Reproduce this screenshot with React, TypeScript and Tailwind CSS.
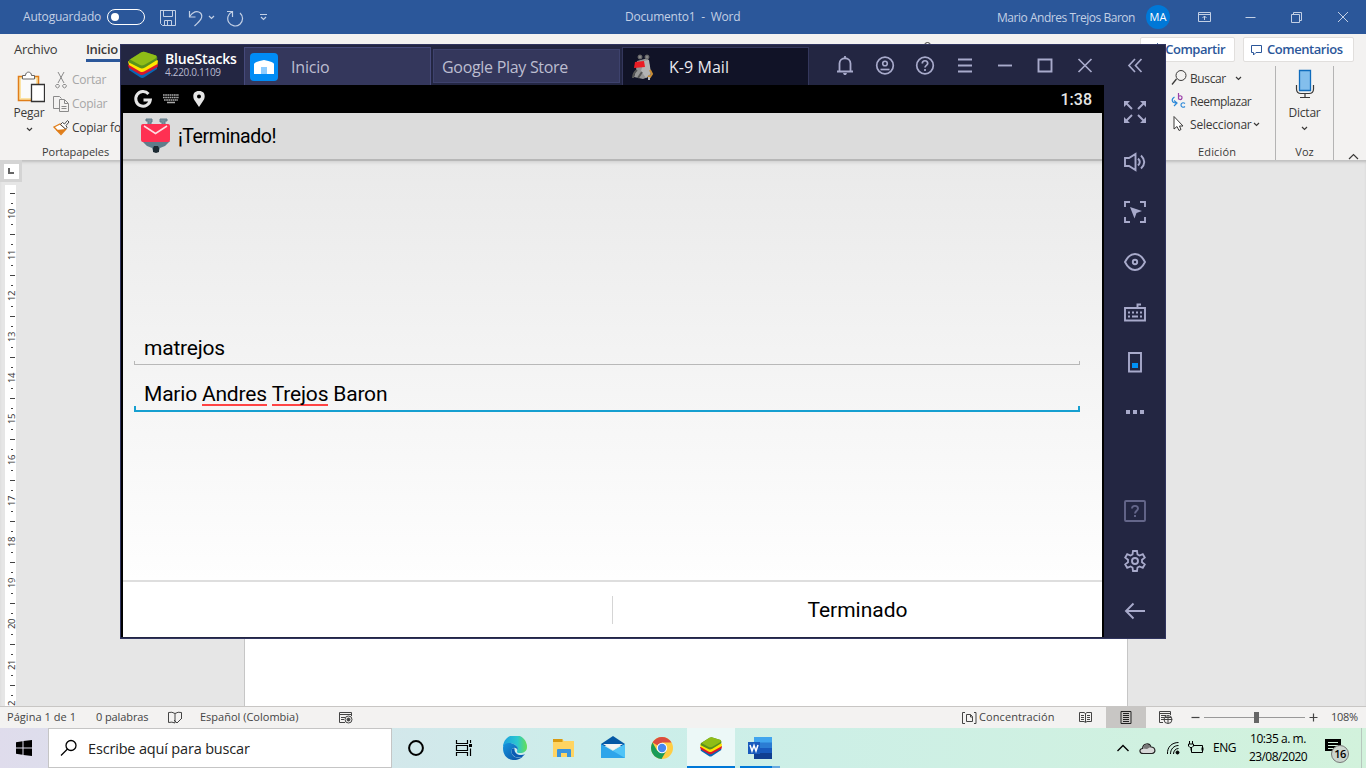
import type { ReactNode } from "react";

type IconProps = { w: number; h: number; className?: string; children: ReactNode };

function Icon({ w, h, className = "", children }: IconProps) {
  return (
    <svg width={w} height={h} viewBox={`0 0 ${w} ${h}`} fill="none" stroke="currentColor" className={`block shrink-0 ${className}`}>
      {children}
    </svg>
  );
}

function Chevron({ className = "" }: { className?: string }) {
  return (
    <Icon w={7} h={5} className={className}>
      <path d="M1 1l2.500 2.500L6 1" strokeWidth="1.200" />
    </Icon>
  );
}

function StackLogo({ size }: { size: number }) {
  return (
    <svg width={size} height={size} viewBox="0 0 30 28" className="block shrink-0">
      <path d="M1 17L16 11 29 16 29 18 16 26.500Q14 27.500 12 26.200L1 19z" fill="#0867b5" />
      <path d="M0 14L16 9 30 13 29.500 16 16 23.500Q14 24.500 12 23.400L1 17z" fill="#d8172d" />
      <path d="M0 10.500L16 6 30 9.500 29.500 13 16 20.500Q14 21.500 12 20.400L1 14z" fill="#ffe600" />
      <path d="M1 9L13 1.500Q15 .5 17 1L28 4.500Q30 6 29 9L17 16.500Q14 18 12 17L1 11.500z" fill="#58921b" />
      <path d="M2 8.500L13 1.500Q15 .5 17 1L28 4.500Q29.500 6 27.500 7.500L17 13.500Q14 15 12 14z" fill="#8fbd17" />
    </svg>
  );
}

function TitleBar() {
  return (
    <header className="flex h-[34px] shrink-0 items-center bg-[#2b579a] text-[#c3d0e5]">
      <span className="ml-[23px] w-[84px] text-[12px] tracking-[-0.2px]">Autoguardado</span>
      <div className="flex h-[16px] w-[38px] items-center rounded-full border border-white px-[3px]">
        <i className="size-[8px] rounded-full bg-white" />
      </div>
      <Icon w={18} h={18} className="ml-[14px] mt-[2px]">
        <path d="M1 1.500H16.500V16.500H3.500L1.500 14.500V1.500zM4.500 1.500V7.500H13.500V1.500M5.500 16.500V11.500H12.500V16.500M8.500 12V16" />
      </Icon>
      <Icon w={16} h={18} className="ml-[11px] mt-[1px]">
        <path d="M1.500 2V8H7.500M1.500 7.500C5 3 9 1 12.500 4 16 8 12 12 6.500 17" strokeWidth="1.200" />
      </Icon>
      <Chevron className="ml-[4px]" />
      <Icon w={18} h={18} className="ml-[11px] mt-[1px]">
        <path d="M1 2.500H6.500V8M6.200 2.800A7.400 7.400 0 1 0 14 4" strokeWidth="1.200" />
      </Icon>
      <Icon w={9} h={8} className="ml-[15px]">
        <path d="M1 1.500H8M2 4l2.500 2.500L7 4" strokeWidth="1.200" />
      </Icon>
      <span className="ml-[357px] w-[118px] whitespace-pre text-[12px] tracking-[-0.22px]">Documento1  -  Word</span>
      <span className="ml-auto w-[149px] whitespace-nowrap pt-[1px] text-[12px] tracking-[-0.47px]">Mario Andres Trejos Baron</span>
      <span className="mr-[28px] flex size-[24px] items-center justify-center rounded-full bg-[#0078d7] text-[11px] text-white">MA</span>
      <Icon w={14} h={12} className="mr-[33px]">
        <path d="M.5 1.500H12.500V10.500H.5zM.5 3.500H12.500M6.500 9V5M4.500 7l2-2 2 2" />
      </Icon>
      <Icon w={11} h={11} className="mr-[35px]">
        <path d="M.5 5.500H10.500" />
      </Icon>
      <Icon w={11} h={11} className="mr-[35px]">
        <path d="M.5 2.500H8.500V10.500H.5zM2.500 2V.5H10.500V8.500H9" />
      </Icon>
      <Icon w={12} h={12} className="mr-[17px]">
        <path d="M1 1l10 10M11 1L1 11" />
      </Icon>
    </header>
  );
}

function Ribbon() {
  return (
    <section className="flex h-[126px] shrink-0 justify-between bg-[#f3f2f1] text-[#3b3a39]">
      <div className="flex w-[130px] flex-col">
        <div className="flex h-[30px] pl-[14px] pt-[6px] text-[13px] leading-[18px]">
          <span className="w-[72px] tracking-[-0.3px]">Archivo</span>
          <span className="h-[22px] w-[34px] whitespace-nowrap border-b-[3px] border-[#2b579a] font-semibold tracking-[-0.35px]">Inicio</span>
        </div>
        <div className="flex h-[80px] text-[12px]">
          <div className="flex w-[53px] shrink-0 flex-col items-center pl-[5px] pt-[7px]">
            <Icon w={28} h={32} className="ml-[4px]">
              <path d="M1.500 5.500H21.500V29.500H1.500z" stroke="#e07e1a" strokeWidth="1.500" fill="#fbe3a5" />
              <path d="M4 8H19V27H4z" fill="#fafafa" stroke="none" />
              <path d="M5.500 8V4.500H8.500C8.500 0 14.500 0 14.500 4.500H17.500V8z" fill="#fff" stroke="#666" />
              <path d="M14.500 13.500H27.500V30.500H14.500z" fill="#fff" stroke="#333" strokeWidth="1.300" />
            </Icon>
            <span className="mt-[1px] leading-[17px] tracking-[-0.2px]">Pegar</span>
            <Chevron className="mt-[6px]" />
          </div>
          <div className="flex flex-col whitespace-nowrap pt-[4px] leading-[24px] text-[#a6a6a6]">
            <div className="flex h-[24px] items-center">
              <Icon w={19} h={18}><path d="M5 1l6 11M11 1L5 12M3.500 13.500a1.800 1.800 0 1 0 2 0zM10.500 13.500a1.800 1.800 0 1 0 2 0z" stroke="#8a8a8a" /></Icon>
              <span className="tracking-[-0.25px]">Cortar</span>
            </div>
            <div className="flex h-[24px] items-center">
              <Icon w={19} h={18}><path d="M6 13.500H.5V1.500H6.500L8.500 3.500M6.500 4.500H11.500L15.500 8.500V16.500H6.500zM11.500 5V8.500H15M8.500 11.500H13.500M8.500 13.500H13.500" stroke="#8a8a8a" /></Icon>
              <span className="tracking-[-0.25px]">Copiar</span>
            </div>
            <div className="flex h-[24px] items-center text-[#3b3a39]">
              <Icon w={19} h={18}>
                <path d="M1 8L7 5 13 10 8 15.500Z" fill="#fff" stroke="#e07e1a" strokeWidth="1.300" />
                <path d="M3 11L8 15 13 10z" fill="#e07e1a" stroke="none" />
                <path d="M7.500 5.500l2-2 2 1.500 3-3.500 1.500 1.500-3 3.500 1 2-1.500 1.500z" fill="#fff" stroke="#444" />
              </Icon>
              <span className="tracking-[-0.25px]">Copiar fo</span>
            </div>
          </div>
        </div>
        <span className="ml-[42px] text-[11px] leading-[16px] tracking-[-0.05px]">Portapapeles</span>
      </div>
      <div className="grow pl-[793px] pt-[7px]">
        <Icon w={9} h={9}><circle cx="4.500" cy="4.500" r="3" /></Icon>
      </div>
      <div className="flex w-[226px] flex-col">
        <div className="flex h-[30px] items-start justify-end gap-[8px] pr-[12px] pt-[3px] text-[13px] font-semibold text-[#2b579a]">
          <button className="flex h-[25px] w-[95px] justify-end rounded-[2px] border border-[#e1dfdd] bg-white pr-[9px] leading-[22px] tracking-[-0.5px]">
            <Icon w={12} h={16} className="mt-[5px]"><path d="M4.500 .5V8M1.500 3.500l3-3 3 3M1.500 8V12.500H8" /></Icon>
            Compartir
          </button>
          <button className="flex h-[25px] w-[111px] items-center rounded-[2px] border border-[#e1dfdd] bg-white pl-[6px] tracking-[-0.45px]">
            <Icon w={13} h={12} className="mr-[4px]"><path d="M1.500 1.500H11.500V8.500H6L3.500 11V8.500H1.500z" /></Icon>
            Comentarios
          </button>
        </div>
        <div className="flex grow text-[12px]">
          <div className="my-[4px] flex w-[136px] flex-col border-r border-[#b4b4b4] pl-[31px]">
            <div className="flex h-[23px] items-center">
              <Icon w={19} h={18}><path d="M5.500 10L1 15.500" strokeWidth="1.300" /><circle cx="10" cy="6.500" r="5" /></Icon>
              <span className="w-[45px] pt-[2px] tracking-[-0.4px]">Buscar</span><Chevron className="mt-[2px]" />
            </div>
            <div className="flex h-[23px] items-center">
              <Icon w={19} h={18}>
                <path d="M3.500 5C0 7 .5 11 5 11M3 8.500L6 11 3 14" stroke="#2b88d8" strokeWidth="1.200" />
                <path d="M7.500 1V7.500M7.500 4.500C9 3 11.500 4 11 6 10.500 8 8.500 8 7.500 6.500" stroke="#9b3fa9" strokeWidth="1.200" />
                <path d="M14 11.500C12 10 10 11 10 13S12 16 14 14.500" stroke="#2b88d8" strokeWidth="1.200" />
              </Icon>
              <span className="pt-[3px] tracking-[-0.5px]">Reemplazar</span>
            </div>
            <div className="flex h-[23px] items-center">
              <Icon w={19} h={18}><path d="M3 1.500V14L6 11.500 8 15.500 10 14.500 8.500 11H12z" fill="#fff" /></Icon>
              <span className="w-[63px] pt-[2px] tracking-[-0.2px]">Seleccionar</span><Chevron className="mt-[2px]" />
            </div>
            <span className="ml-[27px] mt-[8px] text-[11px] leading-[17px] tracking-[0.15px]">Edición</span>
          </div>
          <div className="my-[4px] flex w-[58px] flex-col items-center border-r border-[#b4b4b4]">
            <Icon w={20} h={30} className="mt-[3px]">
              <path d="M4.500 1.500H15.500V21.500H4.500z" fill="#83beec" stroke="#0f6cbd" strokeWidth="1.300" />
              <path d="M1.500 16V20Q1.500 24.500 6 24.500H14Q18.500 24.500 18.500 20V16M10 24.500V28.500M5 28.500H15" strokeWidth="1.200" />
            </Icon>
            <span className="mt-[6px] leading-[16px] tracking-[-0.2px]">Dictar</span>
            <Chevron className="mt-[5px]" />
            <span className="mt-[12px] text-[11px] leading-[17px]">Voz</span>
          </div>
          <div className="flex grow items-end justify-center pb-[4px] pl-[6px]">
            <Icon w={11} h={7}><path d="M1 6l4.500-4.500L10 6" strokeWidth="1.200" /></Icon>
          </div>
        </div>
      </div>
    </section>
  );
}

const RULER = [10, 11, 12, 13, 14, 15, 16, 17, 18, 19, 20, 21, 22];

function Workspace() {
  return (
    <main className="flex h-[546px] shrink-0 overflow-hidden bg-[#e6e6e6] shadow-[inset_0_3px_3px_-1px_#bdbdbd]">
      <div className="w-[244px]">
        <div className="flex size-[22px] items-center justify-center bg-[#d4d4d4]">
          <div className="flex size-[15px] items-center justify-center bg-white">
            <i className="size-[6px] border-b-2 border-l-2 border-[#666]" />
          </div>
        </div>
        <div className="ml-[5px] mt-[3px] flex h-[521px] w-[11px] flex-col overflow-hidden bg-white pt-[8px]">
          {RULER.map((n) => (
            <div key={n} className="flex h-[41px] shrink-0 flex-col items-center">
              <i className="ml-[4px] h-px w-[5px] bg-[#444]" />
              <i className="ml-[3px] mt-[9px] h-px w-[2px] bg-[#444]" />
              <span className="ml-[2px] flex h-[20px] w-[12px] rotate-180 items-center justify-center text-[9.500px] leading-[12px] tracking-[-0.4px] text-[#333] [writing-mode:vertical-rl]">{n}</span>
              <i className="ml-[3px] h-px w-[2px] bg-[#444]" />
            </div>
          ))}
        </div>
      </div>
      <div className="w-[884px] border-x border-[#c6c6c6] bg-white" />
    </main>
  );
}

function StatusBar() {
  return (
    <footer className="flex h-[22px] shrink-0 items-center whitespace-nowrap border-t border-[#c8c6c4] bg-[#f3f2f1] text-[11px] text-[#444]">
      <span className="ml-[7px] w-[89px] tracking-[0.05px]">Página 1 de 1</span>
      <span className="w-[72px] tracking-[-0.1px]">0 palabras</span>
      <Icon w={15} h={13}><path d="M7 2.500Q4 .5 .5 1.500V11.500Q4 10.500 7 12M7 12V2.500Q10 .5 13.500 1.500V8M6 9l3 3 5-5" /></Icon>
      <span className="ml-[17px] w-[138px]">Español (Colombia)</span>
      <Icon w={15} h={13}>
        <path d="M7 11.500H1.500V1.500H13.500V5M1.500 3.500H13M3 6.500H7M3 8.500H6" /><circle cx="10.500" cy="8.500" r="3.500" /><circle cx="10.500" cy="8.500" r="1.500" fill="currentColor" />
      </Icon>
      <Icon w={15} h={14} className="ml-auto">
        <path d="M3 1.500H.5V12.500H3M12 12.500H14V1.500H12M4.500 3.500H8.500L10.500 5.500V10.500H4.500zM8.500 3.500V6H10.500" />
      </Icon>
      <span className="ml-[2px] w-[100px] tracking-[0.08px]">Concentración</span>
      <Icon w={14} h={13}><path d="M6.500 2.500L5 1.500H.5V10.500H5L6.500 11.500 8 10.500H12.500V1.500H8L6.500 2.500V11M2 4.500H5M2 6.500H5M2 8.500H5M8 4.500H11M8 6.500H11M8 8.500H11" /></Icon>
      <div className="ml-[13px] flex h-[22px] w-[40px] items-center justify-center bg-[#c8c6c4]">
        <Icon w={12} h={15}><path d="M1 1.500H11V13.500H1zM3 3.500H9M3 5.500H9M3 7.500H9M3 9.500H9M3 11.500H9" stroke="#222" /></Icon>
      </div>
      <Icon w={15} h={15} className="ml-[12px]"><path d="M5 12.500H1.500V1.500H12.500V5M1.500 3.500H12M3 5.500H8M3 7.500H6M3 9.500H6" /><circle cx="10" cy="9.500" r="4" /><path d="M6 9.500H14M10 5.500V13.500M7 7.500H13" /></Icon>
      <Icon w={9} h={9} className="ml-[18px]"><path d="M.5 4.500H8.500" strokeWidth="1.200" /></Icon>
      <div className="ml-[4px] flex h-[11px] w-[101px] items-center">
        <i className="h-px w-[50px] bg-[#999]" /><i className="h-[11px] w-[5px] bg-[#666]" /><i className="h-px grow bg-[#999]" />
      </div>
      <Icon w={9} h={9} className="ml-[4px]"><path d="M.5 4.500H8.500M4.500 .5V8.500" strokeWidth="1.200" /></Icon>
      <span className="ml-[13px] w-[35px] tracking-[-0.3px]">108%</span>
    </footer>
  );
}

function Cell({ className = "", children }: { className?: string; children: ReactNode }) {
  return <div className={`flex h-[40px] w-[48px] shrink-0 items-center justify-center ${className}`}>{children}</div>;
}

function Taskbar() {
  return (
    <nav className="flex h-[40px] shrink-0 items-center bg-linear-to-r from-[#dfdcec] via-[#cbeeea] via-45% to-[#d2f2dc] text-[12px] text-black">
      <Cell>
        <Icon w={16} h={16}><path d="M0 2.300L6.500 1.300V7.500H0zM7.500 1.100L16 0V7.500H7.500zM0 8.500H6.500V14.700L0 13.700zM7.500 8.500H16V16L7.500 14.900z" fill="#000" stroke="none" /></Icon>
      </Cell>
      <div className="flex h-[40px] w-[344px] items-center border border-[#c5c5c5] bg-white">
        <Icon w={18} h={18} className="ml-[11px]"><circle cx="11" cy="6.500" r="5" strokeWidth="1.300" /><path d="M7.500 10L1 16.500" strokeWidth="1.300" /></Icon>
        <span className="ml-[10px] whitespace-nowrap pt-[1px] text-[14.500px] tracking-[-0.17px] text-[#222]">Escribe aquí para buscar</span>
      </div>
      <Cell><Icon w={18} h={18}><circle cx="9" cy="9" r="6.900" strokeWidth="2" /></Icon></Cell>
      <Cell>
        <Icon w={18} h={16}><path d="M1.500 0V3.500H12.500V0M1.500 16V12.500H12.500V16M1.500 5.500H12.500V10.500H1.500zM15.500 0V3M15.500 8.500V16" strokeWidth="1.200" /><path d="M14 4H17V7H14z" fill="#000" stroke="none" /></Icon>
      </Cell>
      <Cell className="ml-[3px]">
        <svg width="24" height="24" viewBox="0 0 24 24">
          <defs>
            <linearGradient id="edgeTop" x1="0" x2="1"><stop stopColor="#1b9fdf" /><stop offset=".6" stopColor="#2cc7cf" /><stop offset="1" stopColor="#65df55" /></linearGradient>
            <linearGradient id="edgeLow" x1="0" y1="0" x2="1" y2="1"><stop stopColor="#1595df" /><stop offset="1" stopColor="#0c4da0" /></linearGradient>
          </defs>
          <path d="M0 11A12 12 0 0 1 24 11C24 15 21 17 17 17 13 17 14 15 14.500 13.500 15 9 10 7 6 7.500 3 8 1 9 0 11z" fill="url(#edgeTop)" />
          <path d="M0 12C0 8 5 6 9 7.500 14 9 15.500 12 14.500 14 13 11 9 11 8.500 15 8 20 14 24 20 20.500 14 27 0 25 0 12z" fill="url(#edgeLow)" />
          <path d="M8.700 14C7.500 19 13 23 19 21L22 18.200C18 20 11 19 11.500 12.500 9.800 12 9 13 8.700 14z" fill="#0b5bb4" />
        </svg>
      </Cell>
      <Cell className="ml-[1px]">
        <svg width="22" height="20" viewBox="0 0 22 20">
          <path d="M0 1H9L11 3H21V19H0z" fill="#ffd461" /><path d="M0 1H9.500V4H0z" fill="#d99a10" /><path d="M4 19V12Q4 11 5 11H17Q18 11 18 12V19H14V15H8V19z" fill="#3a94dc" />
        </svg>
      </Cell>
      <Cell className="ml-[1px]">
        <svg width="24" height="24" viewBox="0 0 24 24">
          <path d="M0 8L12 0 24 8V10H0z" fill="#0558a5" /><path d="M0 8L12 15 24 8V22H0z" fill="#2da5ea" /><path d="M12 15L24 8V22z" fill="#4fc4f7" /><path d="M2 8H22L12 14z" fill="#f5f5f5" />
        </svg>
      </Cell>
      <Cell className="ml-[1px]">
        <svg width="22" height="22" viewBox="0 0 22 22">
          <circle cx="11" cy="11" r="11" fill="#ffcd43" />
          <path d="M11 11L1.500 5.500A11 11 0 0 1 20.500 5.500H11z" fill="#db4c3f" />
          <path d="M1.500 5.500A11 11 0 0 0 10.500 22L15.500 13.500 6.200 13.700z" fill="#199b57" />
          <circle cx="11" cy="11" r="5.200" fill="#fff" /><circle cx="11" cy="11" r="4.200" fill="#4888ef" />
        </svg>
      </Cell>
      <Cell className="ml-[1px] border-b-2 border-[#0078d7] bg-[#ecf8f7]"><StackLogo size={22} /></Cell>
      <Cell className="ml-[1px]">
        <div className="flex h-[40px] w-[40px] flex-col items-center justify-end">
          <svg width="24" height="22" viewBox="0 0 24 22" className="mb-[7px]">
            <path d="M6 0H24V6H6z" fill="#41a5ee" /><path d="M6 5.500H24V11H6z" fill="#2b7cd3" /><path d="M6 11H24V16H6z" fill="#185abd" /><path d="M6 16H24V22H6z" fill="#103f91" /><path d="M0 5H12V17H0z" fill="#185abd" />
            <path d="M2 8L4 14 6 8.500 8 14 10 8" fill="none" stroke="#fff" strokeWidth="1.500" />
          </svg>
          <div className="flex h-[2px] w-full bg-[#0078d7]"><i className="ml-auto h-[2px] w-[8px] bg-[#66a9e0]" /></div>
        </div>
      </Cell>
      <Icon w={14} h={10} className="ml-auto"><path d="M1.500 8l5.500-5.500L12.500 8" strokeWidth="1.400" /></Icon>
      <Icon w={17} h={13} className="ml-[9px]">
        <path d="M4 11.500C0 11.500 0 6.500 3.500 6.500 4 1 10.500 .5 12 5 17 5 17 11.500 13 11.500z" fill="#d8d8d8" stroke="#222" strokeWidth="1.200" /><path d="M4 6.500C5 1 10 1 11.500 5L8 7z" fill="#777" stroke="none" />
      </Icon>
      <Icon w={14} h={14} className="ml-[10px]"><path d="M1.500 13C1 6 6 1.500 12.500 1.500M4.500 13C4.500 8 8 4.500 12.500 4.500M7.500 13C7.500 10 9.500 7.500 12.500 7.500" /><circle cx="11.500" cy="11.500" r="1.500" fill="#000" /></Icon>
      <Icon w={17} h={14} className="ml-[7px]"><path d="M6 4.500H15.500V11.500H4.500V7M2.500 0V3M5.500 0V3M1.500 3H6.500V5L5 6.500H3L1.500 5zM4 7V9.500" /><path d="M15.500 6.500V9.500" strokeWidth="2" /></Icon>
      <span className="ml-[9px] w-[25px] tracking-[-0.5px]">ENG</span>
      <div className="flex w-[80px] flex-col items-center whitespace-nowrap text-[12px] leading-[18px]"><span className="tracking-[-0.45px]">10:35 a. m.</span><span className="tracking-[-0.55px]">23/08/2020</span></div>
      <div className="relative ml-[6px] mr-[19px] mt-[-2px]">
        <Icon w={18} h={18}><path d="M1 1H17V13H13V17L9 13H1z" fill="#000" stroke="none" /><path d="M4 4.500H14M4 7.500H14M4 10.500H10" stroke="#d4f2de" /></Icon>
        <span className="absolute left-[7px] top-[7px] flex size-[18px] items-center justify-center rounded-full border border-[#777] bg-[#ccd6cf] text-[11px] font-semibold tracking-[-0.5px]">16</span>
      </div>
      <i className="mr-[4px] h-[40px] w-px bg-[#b7c7be]" />
    </nav>
  );
}

function HeaderIcons() {
  return (
    <div className="flex items-center text-[#a8aacb]">
      <Icon w={40} h={40}><path d="M14.500 26.500V18.500C14.500 11.500 25.500 11.500 25.500 18.500V26.500M12 26.500H28M20 11V13" strokeWidth="1.800" /><path d="M18 28H22L21 30H19z" fill="currentColor" stroke="none" /></Icon>
      <Icon w={40} h={40}><circle cx="20" cy="20.500" r="8.300" strokeWidth="1.700" /><circle cx="20" cy="18.500" r="2.300" strokeWidth="1.600" /><path d="M15.500 24.500H24.500" strokeWidth="1.700" /></Icon>
      <Icon w={40} h={40}><circle cx="20" cy="20.500" r="8.300" strokeWidth="1.700" /><path d="M17.300 18.500C17.300 14.800 22.700 14.800 22.700 18.500 22.700 20.200 20 20.500 20 22.500M20 24V26" strokeWidth="1.700" /></Icon>
      <Icon w={40} h={40}><path d="M13 14.500H27M13 20.500H27M13 26.500H27" strokeWidth="1.900" /></Icon>
      <Icon w={40} h={40}><path d="M13 20.500H27" strokeWidth="1.900" /></Icon>
      <Icon w={40} h={40}><path d="M13.500 14.500H26.500V26.500H13.500z" strokeWidth="1.900" /></Icon>
      <Icon w={40} h={40}><path d="M13.500 14L26.500 27M26.500 14L13.500 27" strokeWidth="1.700" /></Icon>
      <Icon w={40} h={40} className="ml-[10px]"><path d="M20 14L14 20.500 20 27M26.500 14L20.500 20.500 26.500 27" strokeWidth="1.700" /></Icon>
    </div>
  );
}

function Tool({ className = "", children }: { className?: string; children: ReactNode }) {
  return <Icon w={24} h={50} className={className}><g transform="translate(0 13)" strokeWidth="1.900">{children}</g></Icon>;
}

function SideTools() {
  return (
    <aside className="flex w-[61px] shrink-0 flex-col items-center pt-[2px] text-[#a8aacb]">
      <Tool><path d="M3.500 3.500L9 9M20.500 3.500L15 9M3.500 20.500L9 15M20.500 20.500L15 15" /><path d="M1 1H7L1 7zM23 1H17L23 7zM1 23H7L1 17zM23 23H17L23 17z" fill="currentColor" stroke="none" /></Tool>
      <Tool><path d="M2 8H6L12.500 4V20L6 16H2zM15 8.500Q18.500 12 15 15.500M18 5.500Q24.500 12 18 18.500" /></Tool>
      <Tool><path d="M2 7V2H7M17 2H22V7M2 17V22H7M17 22H22V17" /><path d="M7 7L19 11 13.500 13 11.500 18.500z" fill="currentColor" stroke="none" /></Tool>
      <Tool><path d="M2 12Q6 4 12 4T22 12Q18 20 12 20T2 12z" /><circle cx="12" cy="12" r="2.200" /></Tool>
      <Tool><path d="M2 8H22V20.500H2zM14.500 8V4.500H18M5 12.500H7M9 12.500H11M13 12.500H15M17 12.500H19M5 16.500H7M9 16.500H15M17 16.500H19" /></Tool>
      <Tool><path d="M6 3H18V21.500H6z" /><path d="M9 13H15V18H9z" fill="#0090f6" stroke="none" /></Tool>
      <Tool><path d="M3 10H7V14H3zM10 10H14V14H10zM17 10H21V14H17z" fill="currentColor" stroke="none" /></Tool>
      <Tool className="mt-[49px] text-[#64668a]"><rect x="2" y="2" width="20" height="20" rx="1" /><path d="M9 9.500C9 6 15 6 15 9.500 15 11.500 12 12 12 14.500M12 16V18" /></Tool>
      <Tool><path d="M10 2H14L14.500 5.500 16.500 6.600 19.800 5.200 21.800 8.600 19 10.800V13.200L21.800 15.400 19.800 18.800 16.500 17.400 14.500 18.500 14 22H10L9.500 18.500 7.500 17.400 4.200 18.800 2.200 15.400 5 13.200V10.800L2.200 8.600 4.200 5.200 7.500 6.600 9.500 5.500z" strokeWidth="1.800" /><circle cx="12" cy="12" r="3" /></Tool>
      <Tool><path d="M10.500 4.500L3 12 10.500 19.500M3 12H22" /></Tool>
    </aside>
  );
}

function EmulatorWindow() {
  return (
    <div className="absolute left-[120px] top-[44px] flex h-[595px] w-[1046px] flex-col border border-[#30345f] bg-[#232642]">
      <div className="flex h-[40px] shrink-0 items-center">
        <div className="ml-[7px]"><StackLogo size={30} /></div>
        <div className="ml-[7px] flex w-[79px] flex-col whitespace-nowrap text-white">
          <span className="text-[14px] font-semibold leading-[14px] tracking-[-0.15px]">BlueStacks</span>
          <span className="text-[10px] leading-[13px] tracking-[-0.3px] text-[#b9bad0]">4.220.0.1109</span>
        </div>
        <div className="mt-[2px] flex h-[38px] w-[187px] items-center border border-b-0 border-[#464a7b] bg-[#34375c] text-[16px] text-[#bcbdd0]">
          <Icon w={28} h={28} className="ml-[5px]"><rect width="28" height="28" rx="4" fill="#008cf5" stroke="none" /><path d="M4 11Q4 9 14 7 24 9 24 11V21H4z" fill="#fff" stroke="none" /><path d="M11 14H17V21H11z" fill="#8dccff" stroke="none" /></Icon>
          <span className="ml-[13px] tracking-[-0.2px]">Inicio</span>
        </div>
        <div className="ml-[2px] mt-[2px] flex h-[34px] w-[187px] items-center whitespace-nowrap border border-[#3e426d] bg-[#34375c] pl-[8px] pt-[1px] text-[16px] tracking-[-0.3px] text-[#bcbdd0]">Google Play Store</div>
        <div className="ml-[2px] mt-[2px] flex h-[38px] w-[187px] items-center border border-b-0 border-[#34375c] bg-[#111327] text-[16px] text-[#e8e8ee]">
          <Icon w={24} h={28} className="ml-[8px]">
            <path d="M6 8L17 5 19 16 20 23 12 26 3 24 5 17z" fill="#969696" stroke="none" /><path d="M13 8L18 7 20 20 15 25 10 18z" fill="#b4b4b4" stroke="none" />
            <path d="M2 25Q2 20 6 17M7 25L11 19" stroke="#555" strokeWidth="2" /><circle cx="9" cy="4" r="2" fill="#888" stroke="#666" /><circle cx="16" cy="4" r="2" fill="#888" stroke="#666" />
            <path d="M4 9L13 8 14 14 3 15z" fill="#eb1c24" stroke="none" /><path d="M19 17L21 21 19 24 17 23" stroke="#c98d35" strokeWidth="2" /><path d="M18 24V27" stroke="#bbb" strokeWidth="2" />
          </Icon>
          <span className="ml-[14px] tracking-[0.05px]">K-9 Mail</span>
        </div>
        <div className="ml-auto mr-[10px]"><HeaderIcons /></div>
      </div>
      <div className="flex grow items-start">
        <div className="flex w-[983px] shrink-0 flex-col border-x-2 border-black bg-white font-[Roboto] text-black">
          <div className="flex h-[28px] shrink-0 items-center bg-black text-[#e6e6e6]">
            <Icon w={20} h={20} className="ml-[10px]"><path d="M15.500 5A7.300 7.300 0 1 0 17.300 11H10.500" strokeWidth="3" /></Icon>
            <Icon w={16} h={12} className="ml-[10px] text-[#aaa]"><path d="M0 2H16M0 4.500H16M1 7H15" strokeWidth="1.700" strokeDasharray="1.700 .5" /><path d="M4 9.500H12" strokeWidth="1.500" /></Icon>
            <Icon w={12} h={18} className="ml-[14px]"><path d="M6 1C-1 1-.5 8 2 11L6 17 10 11C12.500 8 13 1 6 1zM6 4.500A2 2 0 1 1 6 8.500 2 2 0 1 1 6 4.500z" fill="currentColor" fillRule="evenodd" stroke="none" /></Icon>
            <span className="ml-auto mr-[10px] pt-[2px] text-[16px] font-medium leading-[20px]">1:38</span>
          </div>
          <div className="flex h-[48px] shrink-0 items-center border-b-2 border-[#b7b7b7] bg-[#dcdcdc]">
            <svg width="32" height="36" viewBox="0 0 32 36" className="ml-[17px]">
              <path d="M8 7V3H6V1H12V4H11V8M22 7V4H20V1H27V3H25V8" fill="#78909c" stroke="#607d8b" />
              <path d="M2 23H30L25 28 20 30 19 33H13L12 30 7 28z" fill="#607d8b" /><path d="M13 30L14 28H18L19 30V34L16 35 13 34z" fill="#1d2b33" />
              <rect x="1" y="6" width="29" height="18" rx="2" fill="#ff3052" /><path d="M4 8L15.500 15.500 27 8" fill="none" stroke="#ffdce2" strokeWidth="1.500" />
            </svg>
            <span className="ml-[6px] pt-[2px] text-[19.500px] tracking-[-0.42px]">¡Terminado!</span>
          </div>
          <div className="flex h-[419px] shrink-0 flex-col bg-linear-to-b from-[#eaeaea] to-[#fefefe] pl-[11px] pr-[22px] pt-[171px] text-[21px] leading-[22px] tracking-[-0.2px] shadow-[inset_0_4px_3px_-2px_#d5d5d5]">
            <div className="flex h-[29px] flex-col pl-[10px]"><span className="pt-[5px]">matrejos</span></div>
            <div className="h-[4px] border border-t-0 border-[#b8b8b8]" />
            <div className="flex h-[41px] gap-[5px] whitespace-nowrap pl-[10px] pt-[18px]">
              <span>Mario</span>
              <span className="h-[23px] border-b-2 border-[#ff4444]">Andres</span>
              <span className="h-[23px] border-b-2 border-[#ff4444]">Trejos</span>
              <span>Baron</span>
            </div>
            <div className="h-[6px] border-2 border-t-0 border-[#169fd0]" />
          </div>
          <div className="flex h-[57px] items-center border-t-2 border-[#dedede]">
            <div className="h-[28px] w-[490px] border-r border-[#d5d5d5]" />
            <div className="grow pt-[2px] text-center text-[21px]">Terminado</div>
          </div>
        </div>
        <SideTools />
      </div>
    </div>
  );
}

export default function App() {
  return (
    <div className="relative flex h-[768px] w-[1366px] flex-col overflow-hidden font-['Open_Sans','Noto_Sans',sans-serif]">
      <TitleBar />
      <Ribbon />
      <Workspace />
      <StatusBar />
      <Taskbar />
      <EmulatorWindow />
    </div>
  );
}
